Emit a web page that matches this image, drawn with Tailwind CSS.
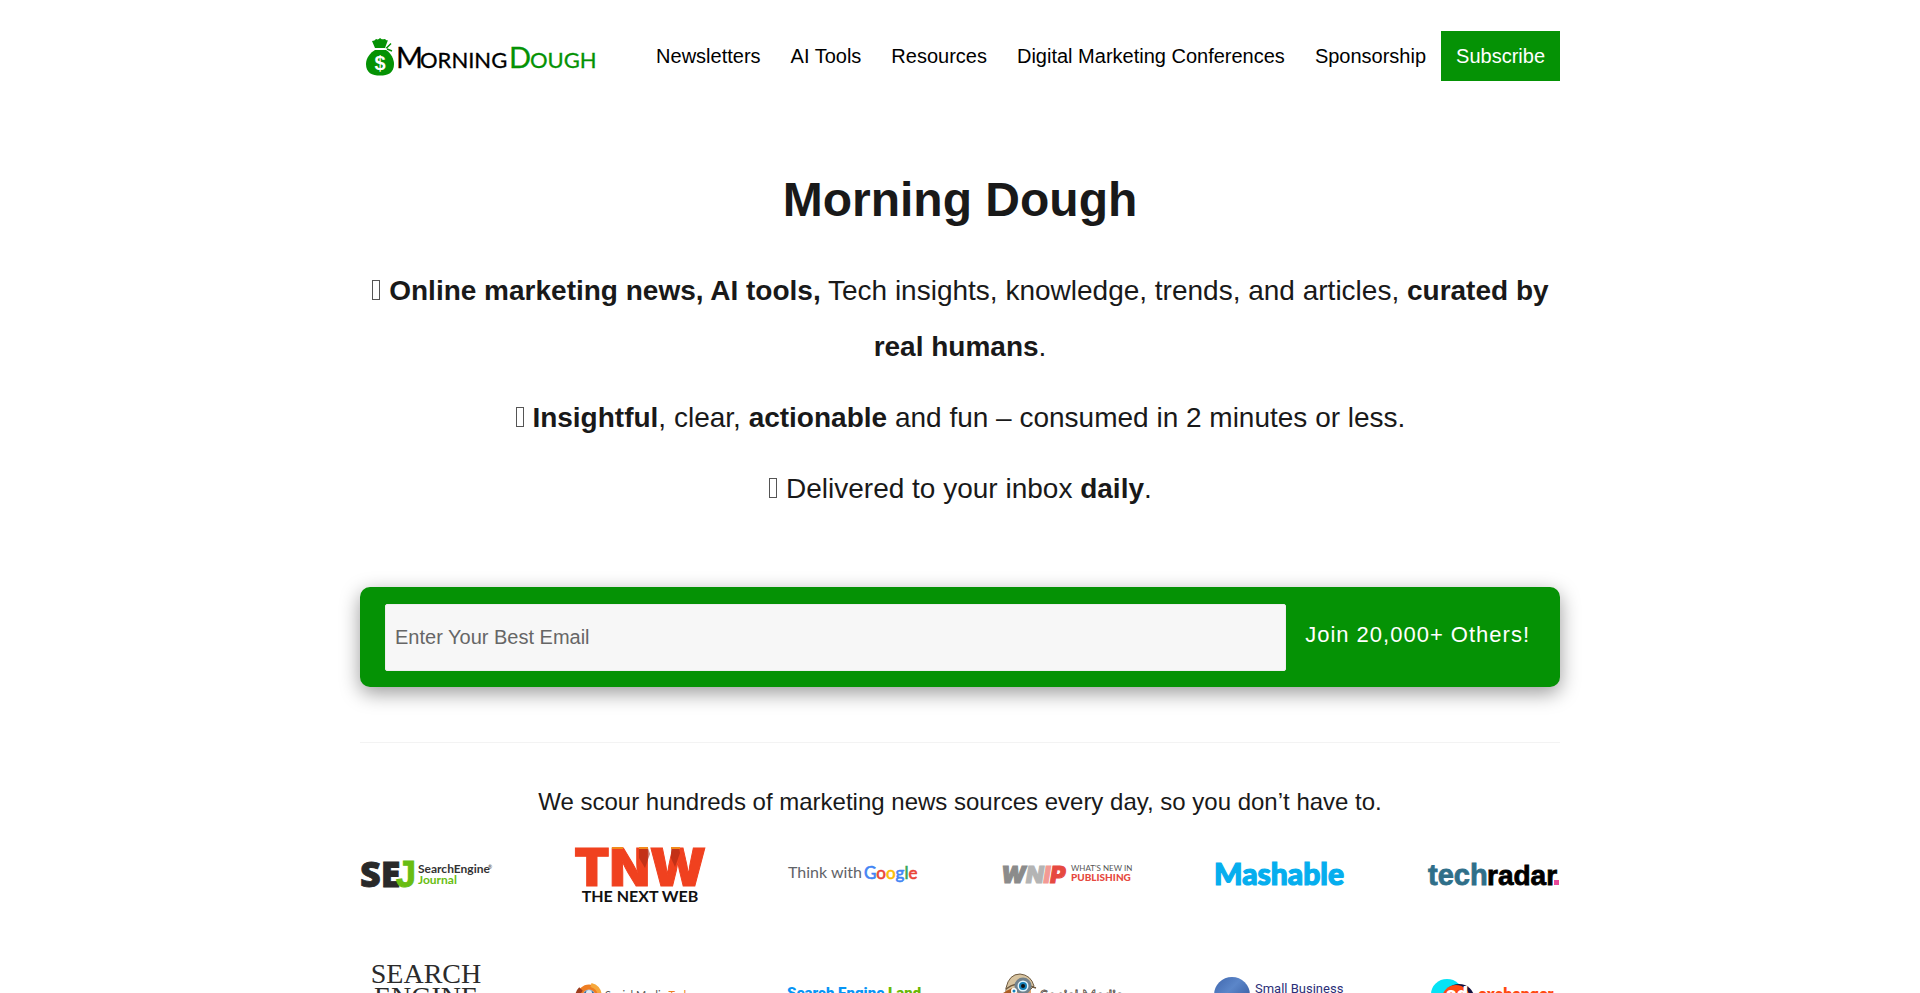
<!DOCTYPE html>
<html lang="en">
    <head>
        <meta charset="UTF-8" />
        <meta name="viewport" content="width=device-width, initial-scale=1.0" />
        <title>Morning Dough</title>
        <script src="https://cdn.jsdelivr.net/npm/@tailwindcss/browser@4"></script>
    </head>
    <body class="bg-white font-['Liberation_Sans',Arial,sans-serif] text-[#191919]">
        <header class="max-w-[1200px] mx-auto pt-[31px] flex flex-wrap items-center justify-between">
            <a href="#" aria-label="Morning Dough">
                <svg class="w-60 h-[50px]" viewBox="0 0 240 50">
                    <!-- money bag -->
                    <g fill="#049204">
                        <path d="M12 10c2 0 3-1 4-2 2 1 3 0 4-1 2 2 3 1 5 1 1 1 2 2 3 1l-3 8H15z" />
                        <path d="M15 19h11c5 3 8 9 8 14 0 9-6 11.5-14 11.5S6 42 6 33c0-6 4-11 9-14z" />
                        <path d="M26 17.5l5-5M27 18l5 2" fill="none" stroke="#049204" stroke-width="1.5" />
                    </g>
                    <path d="M14 18h13" stroke="#fff" stroke-width="1" />
                    <text x="20" y="39" text-anchor="middle" font-family="Liberation Sans" font-weight="700" font-size="20" fill="#fff">$</text>
                    <g font-family="Lato, sans-serif">
                        <text x="36" y="37" font-size="29" stroke="#000" stroke-width="0.3">M</text>
                        <text x="60" y="37" font-size="22" stroke="#000" stroke-width="0.3">ORNING</text>
                        <g fill="#049204" stroke="#049204" stroke-width="0.3">
                            <text x="149" y="37" font-size="29">D</text>
                            <text x="170" y="37" font-size="22">OUGH</text>
                        </g>
                    </g>
                </svg>
            </a>
            <nav class="flex flex-wrap items-center text-xl text-black">
                <a href="#" class="px-[15px] leading-[50px]">Newsletters</a>
                <a href="#" class="px-[15px] leading-[50px]">AI Tools</a>
                <a href="#" class="px-[15px] leading-[50px]">Resources</a>
                <a href="#" class="px-[15px] leading-[50px]">Digital Marketing Conferences</a>
                <a href="#" class="px-[15px] leading-[50px]">Sponsorship</a>
                <a href="#" class="px-[15px] leading-[50px] bg-[#059205] text-white">Subscribe</a>
            </nav>
        </header>

        <main class="max-w-[1200px] mx-auto">
            <section class="text-center pt-[89px]">
                <h1 class="text-5xl leading-[60px] font-bold">Morning Dough</h1>
                <div class="mt-[33px] space-y-[15px] text-[28px] leading-[56px]">
                    <p><span class="inline-block w-2 h-5 mx-px border border-[#555555]"></span> <strong>Online marketing news, AI tools,</strong> Tech insights, knowledge, trends, and articles, <strong>curated by real humans</strong>.</p>
                    <p><span class="inline-block w-2 h-5 mx-px border border-[#555555]"></span> <strong>Insightful</strong>, clear, <strong>actionable</strong> and fun – consumed in 2 minutes or less.</p>
                    <p><span class="inline-block w-2 h-5 mx-px border border-[#555555]"></span> Delivered to your inbox <strong>daily</strong>.</p>
                </div>
            </section>

            <form class="mt-[70px] h-[100px] px-[25px] flex items-center bg-[#059205] rounded-[10px] shadow-[0_6px_20px_rgba(0,0,0,0.4)]">
                <label for="email" class="sr-only">Email</label>
                <input type="email" id="email" placeholder="Enter Your Best Email" class="flex-1 min-w-0 h-[67px] px-[9px] bg-[#f7f7f7] border border-[#eeeeee] rounded-xs text-xl placeholder:text-[#666666]" />
                <button type="button" class="px-[19px] -mr-3.5 pb-1.5 text-[22px] tracking-[1px] text-white">Join 20,000+ Others!</button>
            </form>

            <hr class="mt-[55px] border-[#f3f3f3]" />

            <section>
                <h2 class="mt-[41px] text-2xl leading-9 text-center">We scour hundreds of marketing news sources every day, so you don’t have to.</h2>

                <div class="mt-[22px] flex justify-between">
                    <!-- Search Engine Journal -->
                    <svg class="w-[132px] h-16 overflow-visible" viewBox="0 0 132 64" font-family="Lato, sans-serif">
                        <text x="0" y="45" font-family="Open Sans, sans-serif" font-size="36" font-weight="800" fill="#292929" stroke="#292929" stroke-width="0.8">SE</text>
                        <text x="36" y="45" font-family="Liberation Sans" font-size="36" font-weight="700" fill="#69bd12" stroke="#69bd12" stroke-width="1">J</text>
                        <text x="58" y="31" font-size="12" font-weight="700" fill="#333">SearchEngine</text>
                        <text x="128" y="27" font-size="5" fill="#333">®</text>
                        <text x="58" y="42" font-size="12" font-weight="700" fill="#69bd12">Journal</text>
                    </svg>
                    <!-- The Next Web -->
                    <svg class="w-[132px] h-16 overflow-visible" viewBox="0 0 132 64">
                        <text x="0" y="44" font-family="Inter, sans-serif" font-size="52" font-weight="900" fill="#f0411f" stroke="#f0411f" stroke-width="1">TNW</text>
                        <path d="M65 6h9l2 6-5 14-6-10z" fill="#a52613" opacity=".6" />
                        <path d="M97 6h8l1 5-5 14-4-9z" fill="#a52613" opacity=".6" />
                        <path d="M38 6h11M65 6h9M97 6h9" stroke="#f28a1c" stroke-width="2" />
                        <text x="66" y="60" text-anchor="middle" font-family="Lato, sans-serif" font-size="16" font-weight="700" fill="#111">THE NEXT WEB</text>
                    </svg>
                    <!-- Think with Google -->
                    <svg class="w-[132px] h-16 overflow-visible" viewBox="0 0 132 64" font-family="Lato, sans-serif">
                        <text x="1" y="36" font-size="16" fill="#5f6368">Think with</text>
                        <text x="77" y="37" font-size="17"><tspan fill="#4285f4" stroke="#4285f4" stroke-width="0.6">G</tspan><tspan fill="#ea4335" stroke="#ea4335" stroke-width="0.6">o</tspan><tspan fill="#fbbc05" stroke="#fbbc05" stroke-width="0.6">o</tspan><tspan fill="#4285f4" stroke="#4285f4" stroke-width="0.6">g</tspan><tspan fill="#34a853" stroke="#34a853" stroke-width="0.6">l</tspan><tspan fill="#ea4335" stroke="#ea4335" stroke-width="0.6">e</tspan></text>
                    </svg>
                    <!-- What's New in Publishing -->
                    <svg class="w-[132px] h-16 overflow-visible" viewBox="0 0 132 64">
                        <text x="0" y="41" font-family="Inter, sans-serif" font-size="23" font-weight="900" font-style="italic"><tspan fill="#8b8b8b" stroke="#8b8b8b">W</tspan><tspan fill="#b4b4b4" stroke="#b4b4b4">N</tspan><tspan fill="#f39a94" stroke="#f39a94">I</tspan><tspan fill="#e64940" stroke="#e64940">P</tspan></text>
                        <text x="70" y="29" font-family="Lato, sans-serif" font-size="8" fill="#555">WHAT'S NEW IN</text>
                        <text x="70" y="39" font-family="Lato, sans-serif" font-size="10" font-weight="900" fill="#e64940">PUBLISHING</text>
                    </svg>
                    <!-- Mashable -->
                    <svg class="w-[132px] h-16 overflow-visible" viewBox="0 0 132 64">
                        <text x="0" y="43" font-family="Lato, sans-serif" font-size="30" font-weight="900" fill="#06aeee" stroke="#06aeee" stroke-width="1.2">Mashable</text>
                    </svg>
                    <!-- techradar -->
                    <svg class="w-[132px] h-16 overflow-visible" viewBox="0 0 132 64" font-family="Liberation Sans" font-weight="700">
                        <text x="0" y="43" font-size="29" fill="#2f6f89" stroke="#2f6f89" stroke-width="0.8">tech</text>
                        <text x="59" y="43" font-size="28" fill="#000" stroke="#000" stroke-width="0.8">radar</text>
                        <path d="M126 38h5v5h-5z" fill="#e84a9a" />
                    </svg>
                </div>

                <div class="mt-11 flex justify-between">
                    <!-- Search Engine Roundtable -->
                    <svg class="w-[132px] h-[100px]" viewBox="0 0 132 100" font-family="Liberation Serif" fill="#2b2b2b">
                        <text x="66" y="33" text-anchor="middle" font-size="28">SEARCH</text>
                        <text x="66" y="56" text-anchor="middle" font-size="28">ENGINE</text>
                        <text x="66" y="74" text-anchor="middle" font-size="17">ROUNDTABLE</text>
                    </svg>
                    <!-- Social Media Today -->
                    <svg class="w-[132px] h-[100px]" viewBox="0 0 132 100" font-family="Lato, sans-serif">
                        <circle cx="15" cy="46" r="9" fill="#b9d3ea" stroke="#ee7d22" stroke-width="5" />
                        <path d="M7 39a11 11 0 0 0-3 10" fill="none" stroke="#9d3d1d" stroke-width="5" />
                        <path d="M17 35a12 12 0 0 1 9 10" fill="none" stroke="#f6a83c" stroke-width="4" />
                        <circle cx="15" cy="46" r="6" fill="#3d6b9c" />
                        <circle cx="15" cy="43" r="3" fill="#dcecf7" />
                        <text x="31" y="49" font-size="11" fill="#555">Social Media <tspan fill="#ee7d22">Today</tspan></text>
                    </svg>
                    <!-- Search Engine Land -->
                    <svg class="w-[132px] h-[100px] overflow-visible" viewBox="0 0 132 100" font-family="Roboto, sans-serif">
                        <text x="0" y="48" font-size="15" font-weight="900" fill="#0795f5">Search Engine <tspan fill="#68b807">Land</tspan></text>
                    </svg>
                    <!-- Social Media Examiner -->
                    <svg class="w-[132px] h-[100px]" viewBox="0 0 132 100">
                        <path d="M5 38q3-14 14-14 11 1 14 12l-8 8H5z" fill="#d8c4a0" stroke="#6e5a40" stroke-width="1" />
                        <path d="M5 39c6-5 15-7 21-4l9 3" fill="none" stroke="#6e5a40" stroke-width="1.5" />
                        <path d="M5 40h25v18H7z" fill="#e0a36c" />
                        <path d="M2 43l9-5-3 14-5-2z" fill="#aa5c23" />
                        <circle cx="22" cy="36" r="7" fill="#e2f4fc" stroke="#71818c" stroke-width="3" />
                        <circle cx="22" cy="36" r="4" fill="#137fb9" />
                        <circle cx="22" cy="36" r="2" fill="#111" />
                        <circle cx="13" cy="41" r="3" fill="#fff" />
                        <circle cx="13" cy="41" r="1.5" fill="#137fb9" />
                        <text x="39" y="51" font-family="Lato, sans-serif" font-size="15" fill="#fff" stroke="#4b4036" stroke-width="0.8">Social Media</text>
                        <text x="39" y="68" font-family="Lato, sans-serif" font-size="15" fill="#4b4036">Examiner</text>
                    </svg>
                    <!-- Small Business Trends -->
                    <svg class="w-[132px] h-[100px]" viewBox="0 0 132 100" font-family="Roboto, sans-serif" fill="#2b2e78">
                        <defs>
                            <linearGradient id="globe" x1="0" y1="0" x2="1" y2="1">
                                <stop offset="0" stop-color="#3f66ad" />
                                <stop offset="0.4" stop-color="#5b86c9" />
                                <stop offset="1" stop-color="#284b91" />
                            </linearGradient>
                        </defs>
                        <circle cx="18" cy="45" r="18" fill="url(#globe)" />
                        <text x="41" y="43" font-size="13">Small Business</text>
                        <text x="41" y="60" font-size="18" font-weight="700">TRENDS</text>
                    </svg>
                    <!-- AdExchanger -->
                    <svg class="w-[132px] h-[100px]" viewBox="0 0 132 100" font-family="Roboto, sans-serif" font-weight="900">
                        <ellipse cx="19" cy="44" rx="16" ry="15" fill="#06e3f5" />
                        <ellipse cx="31" cy="48" rx="15" ry="14" fill="#12123f" />
                        <ellipse cx="28" cy="49" rx="14" ry="14" fill="#ff4a12" />
                        <text x="18" y="51" font-size="20" fill="#fff">ad</text>
                        <text x="50" y="50" font-size="16" fill="#ff4a12">exchanger</text>
                    </svg>
                </div>
            </section>
        </main>
    </body>
</html>
